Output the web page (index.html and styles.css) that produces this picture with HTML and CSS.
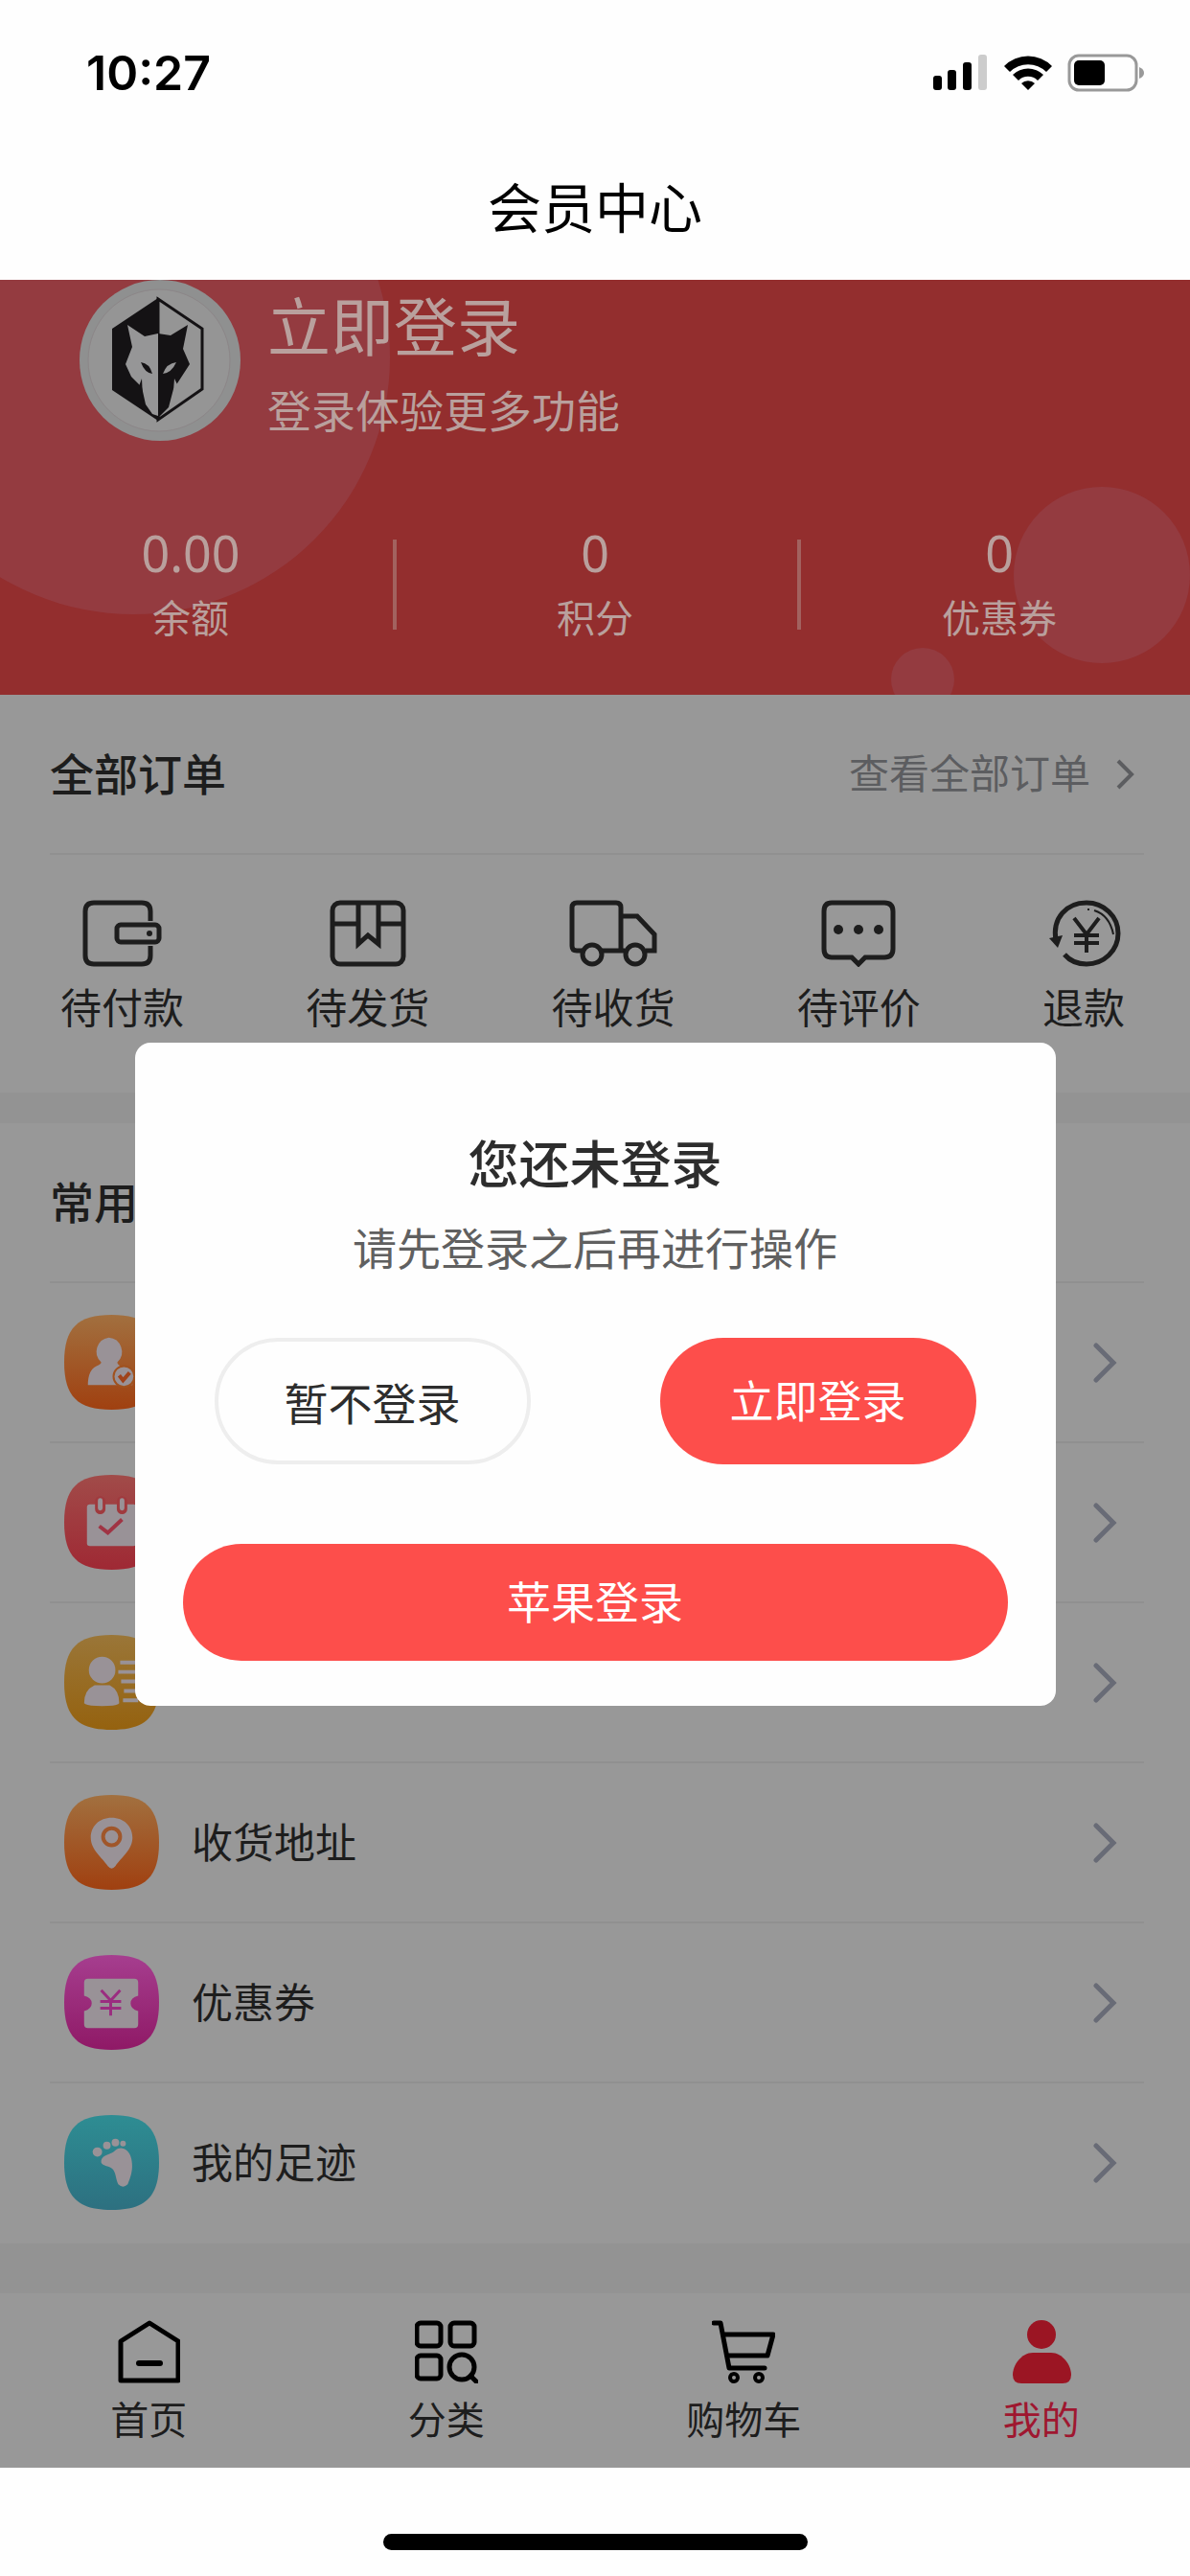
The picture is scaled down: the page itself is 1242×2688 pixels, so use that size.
FILE: index.html
```html
<!DOCTYPE html>
<html lang="zh-CN">
<head>
    <meta charset="UTF-8">
    <meta name="viewport" content="width=device-width, initial-scale=1.0">
    <title>会员中心</title>
    <link rel="stylesheet" href="styles.css">
</head>
<body>
    <div class="status-bar">
        <span class="time">10:27</span>
        <svg class="status-icons" viewBox="0 0 222 40">
            <rect x="0" y="23" width="9" height="15" rx="3"/>
            <rect x="15" y="17" width="9" height="21" rx="3"/>
            <rect x="31" y="9" width="9" height="29" rx="3"/>
            <rect x="47" y="1" width="9" height="37" rx="3" fill="#ccc"/>
            <path d="M74 13 A35 35 0 0 1 124 13 L118 19 A27 27 0 0 0 80 19 Z"/>
            <path d="M83 22 A23 23 0 0 1 115 22 L109 28 A14 14 0 0 0 89 28 Z"/>
            <path d="M92 31 A10 10 0 0 1 106 31 L99 38 Z"/>
            <rect x="142" y="2" width="70" height="36" rx="10" fill="none" stroke="#999" stroke-width="3"/>
            <path d="M215 14 Q220 16 220 20 Q220 24 215 26 Z" fill="#999"/>
            <rect x="147" y="7" width="32" height="26" rx="5"/>
        </svg>
    </div>
    <header class="nav-bar">会员中心</header>

    <main class="page">
        <section class="member">
            <svg class="bubbles" viewBox="0 0 1242 433" preserveAspectRatio="none">
                <circle cx="139" cy="81" r="268"/>
                <circle cx="1150" cy="308" r="92"/>
                <circle cx="963" cy="417" r="33"/>
            </svg>
            <div class="user">
                <svg class="avatar" viewBox="0 0 168 168">
                    <circle cx="84" cy="84" r="84" fill="#8f9090"/>
                    <circle cx="83" cy="84" r="74" fill="#959595" stroke="#8c8688" stroke-width="1"/>
                    <path d="M82 20 L128 51 V114 L82 146 Z" fill="none" stroke="#141214" stroke-width="3"/>
                    <path d="M82 19 L34 51 V115 L82 147 Z" fill="#141214"/>
                    <path d="M82 56 L68 59 L50 47 L55 70 L48 88 L54 101 L65 112 L69 130 L76 140 L82 142 Z" fill="#969697"/>
                    <path d="M82 56 L95 58 L113 47 L108 72 L115 88 L104 105 L98 114 L93 133 L82 144 Z" fill="#141214"/>
                    <path d="M64 86 Q73 87 76 98 Q68 97 64 86 Z M65 103 L66 124 L62 111 Z" fill="#141214"/>
                    <path d="M101 86 Q91 87 87 98 Q96 97 101 86 Z M99 103 L102 109 L98 116 Z" fill="#969697"/>
                </svg>
                <div class="user-text">
                    <a class="login-link" href="#">立即登录</a>
                    <p class="login-tip">登录体验更多功能</p>
                </div>
            </div>
            <div class="stats">
                <div class="stat"><span class="stat-num">0.00</span>余额</div>
                <div class="stat"><span class="stat-num">0</span>积分</div>
                <div class="stat"><span class="stat-num">0</span>优惠券</div>
            </div>
        </section>

        <section class="orders">
            <div class="section-head">
                <h2>全部订单</h2>
                <a class="more" href="#">查看全部订单
                    <svg class="more-arrow" viewBox="0 0 20 32"><path d="M3 2 L17 16 L3 30"/></svg>
                </a>
            </div>
            <nav class="order-nav">
                <a href="#">
                    <svg class="order-icon" viewBox="0 0 84 70">
                        <path d="M71 22 V12 Q71 3 62 3 H12 Q3 3 3 12 V58 Q3 67 12 67 H62 Q71 67 71 58 V48"/>
                        <rect x="36" y="26" width="44" height="18" rx="4"/>
                        <circle class="dot" cx="70" cy="35" r="3"/>
                    </svg>
                    待付款
                </a>
                <a href="#">
                    <svg class="order-icon" viewBox="0 0 84 70">
                        <rect x="5" y="3" width="74" height="64" rx="8"/>
                        <path d="M5 25 H32 M53 25 H79 M32 3 V46 L42 37 L53 46 V3"/>
                    </svg>
                    待发货
                </a>
                <a href="#">
                    <svg class="order-icon truck" viewBox="0 0 92 70">
                        <path d="M14 53 H8 Q3 53 3 48 V8 Q3 3 8 3 H49 Q54 3 54 8 V53 M34 53 H58 M54 17 H71 L89 36 V53 H80"/>
                        <circle cx="24" cy="57" r="10"/>
                        <circle cx="69" cy="57" r="10"/>
                    </svg>
                    待收货
                </a>
                <a href="#">
                    <svg class="order-icon" viewBox="0 0 84 70">
                        <path d="M14 3 H69 Q78 3 78 12 V51 Q78 60 69 60 H49 L42 67 L35 60 H14 Q6 60 6 51 V12 Q6 3 14 3 Z"/>
                        <circle class="dot" cx="21" cy="31" r="5"/>
                        <circle class="dot" cx="42" cy="31" r="5"/>
                        <circle class="dot" cx="63" cy="31" r="5"/>
                    </svg>
                    待评价
                </a>
                <a href="#">
                    <svg class="order-icon" viewBox="-2 0 84 70">
                        <path d="M11 42 C7 19 22 3 43 3 C61 3 76 17 76 35 C76 53 61 67 43 67 C34 67 26 64 20 57"/>
                        <path class="dot" d="M4 40 L18 37 L13 50 Z"/>
                        <path stroke-width="4" d="M30 19 L43 36 L56 19 M43 36 V55 M30 37 H56 M30 45 H56"/>
                        <path stroke-width="2" d="M44 10 H46 M51 11 Q67 16 71 36"/>
                    </svg>
                    退款
                </a>
            </nav>
        </section>

        <section class="tools">
            <div class="section-head"><h2>常用</h2></div>
            <ul class="tool-list">
                <li><a href="#" aria-label="认证">
                    <svg class="tool-icon" viewBox="0 0 100 100">
                        <defs>
                            <linearGradient id="orange" x2="0" y2="1"><stop stop-color="#a2703f"/><stop offset="1" stop-color="#a04010"/></linearGradient>
                            <linearGradient id="red" x2="0" y2="1"><stop stop-color="#a14b49"/><stop offset="1" stop-color="#9f2934"/></linearGradient>
                            <linearGradient id="gold" x2="0" y2="1"><stop stop-color="#9a7638"/><stop offset="1" stop-color="#95620f"/></linearGradient>
                            <linearGradient id="pink" x2="0" y2="1"><stop stop-color="#a63e8f"/><stop offset="1" stop-color="#8f1966"/></linearGradient>
                            <linearGradient id="teal" x2="0" y2="1"><stop stop-color="#2e8d93"/><stop offset="1" stop-color="#2d7080"/></linearGradient>
                        </defs>
                        <path class="tile" fill="url(#orange)" d="M50 0 C86 0 100 14 100 50 C100 86 86 100 50 100 C14 100 0 86 0 50 C0 14 14 0 50 0 Z"/>
                        <path d="M47 24 A15 15 0 0 1 56 50 Q56 53 62 55 Q71 58 72 74 H25 Q25 58 34 54 Q39 52 39 50 A15 15 0 0 1 47 24 Z"/>
                        <circle cx="63" cy="65" r="11" stroke="#a0521f" stroke-width="2"/>
                        <path d="M58 64 L62 69 L69 61" fill="none" stroke="#a0421a" stroke-width="4"/>
                    </svg>
                    <svg class="arrow" viewBox="0 0 26 42"><path d="M4 3 L22 21 L4 39"/></svg>
                </a></li>
                <li><a href="#" aria-label="签到">
                    <svg class="tool-icon" viewBox="0 0 100 100">
                        <path class="tile" fill="url(#red)" d="M50 0 C86 0 100 14 100 50 C100 86 86 100 50 100 C14 100 0 86 0 50 C0 14 14 0 50 0 Z"/>
                        <rect x="24" y="31" width="52" height="44" rx="3"/>
                        <path d="M38 28 V36 M61 28 V36" stroke="#a03a3e" stroke-width="11" stroke-linecap="round"/>
                        <path d="M38 27 V35 M61 27 V35" stroke="#999297" stroke-width="5" stroke-linecap="round"/>
                        <path d="M37 54 L46 61 L61 47" fill="none" stroke="#a03444" stroke-width="4"/>
                    </svg>
                    <svg class="arrow" viewBox="0 0 26 42"><path d="M4 3 L22 21 L4 39"/></svg>
                </a></li>
                <li><a href="#" aria-label="资料">
                    <svg class="tool-icon" viewBox="0 0 100 100">
                        <path class="tile" fill="url(#gold)" d="M50 0 C86 0 100 14 100 50 C100 86 86 100 50 100 C14 100 0 86 0 50 C0 14 14 0 50 0 Z"/>
                        <circle cx="40" cy="37" r="14"/>
                        <path d="M32 53 H48 Q58 58 58 72 Q56 75 40 75 Q24 75 21 72 Q21 58 32 53 Z"/>
                        <path d="M59 29 H78 M57 39 H78 M60 49 H78 M63 59 H78 M62 69 H78" stroke="#999297" stroke-width="4"/>
                    </svg>
                    <svg class="arrow" viewBox="0 0 26 42"><path d="M4 3 L22 21 L4 39"/></svg>
                </a></li>
                <li><a href="#">
                    <svg class="tool-icon" viewBox="0 0 100 100">
                        <path class="tile" fill="url(#orange)" d="M50 0 C86 0 100 14 100 50 C100 86 86 100 50 100 C14 100 0 86 0 50 C0 14 14 0 50 0 Z"/>
                        <path d="M50 24 C63 24 72 33 72 45 C72 58 60 66 54 75 Q50 80 46 75 C40 66 28 58 28 45 C28 33 37 24 50 24 Z"/>
                        <circle cx="50" cy="44" r="9" stroke="#a0562a" stroke-width="4"/>
                    </svg>
                    <span class="tool-name">收货地址</span>
                    <svg class="arrow" viewBox="0 0 26 42"><path d="M4 3 L22 21 L4 39"/></svg>
                </a></li>
                <li><a href="#">
                    <svg class="tool-icon" viewBox="0 0 100 100">
                        <path class="tile" fill="url(#pink)" d="M50 0 C86 0 100 14 100 50 C100 86 86 100 50 100 C14 100 0 86 0 50 C0 14 14 0 50 0 Z"/>
                        <path d="M25 25 H74 Q78 25 78 29 V43 Q70 45 70 51 Q70 57 78 59 V73 Q78 77 74 77 H25 Q21 77 21 73 V59 Q29 57 29 51 Q29 45 21 43 V29 Q21 25 25 25 Z"/>
                        <path d="M39 37 L49 48 L59 37 M49 48 V64 M38 49 H60 M38 56 H60" fill="none" stroke="#9b2d80" stroke-width="3"/>
                    </svg>
                    <span class="tool-name">优惠券</span>
                    <svg class="arrow" viewBox="0 0 26 42"><path d="M4 3 L22 21 L4 39"/></svg>
                </a></li>
                <li><a href="#">
                    <svg class="tool-icon" viewBox="0 0 100 100">
                        <path class="tile" fill="url(#teal)" d="M50 0 C86 0 100 14 100 50 C100 86 86 100 50 100 C14 100 0 86 0 50 C0 14 14 0 50 0 Z"/>
                        <circle cx="35" cy="39" r="5"/>
                        <circle cx="45" cy="32" r="4"/>
                        <circle cx="54" cy="29" r="4"/>
                        <circle cx="62" cy="30" r="3"/>
                        <path d="M39 48 C40 41 50 42 54 37 C60 32 69 36 71 47 C73 58 70 65 67 73 Q62 78 57 73 C54 67 55 60 50 56 C46 53 38 54 39 48 Z"/>
                    </svg>
                    <span class="tool-name">我的足迹</span>
                    <svg class="arrow" viewBox="0 0 26 42"><path d="M4 3 L22 21 L4 39"/></svg>
                </a></li>
            </ul>
        </section>

        <nav class="tab-bar">
            <a href="#">
                <svg class="tab-icon" viewBox="0 0 66 66">
                    <path d="M34 3 L64 22 V63 H4 V22 Z" stroke-width="5"/>
                    <path d="M23 45 H45" stroke-width="6"/>
                </svg>
                首页
            </a>
            <a href="#">
                <svg class="tab-icon" viewBox="0 0 66 66">
                    <rect x="2" y="3" width="25" height="24" rx="4"/>
                    <rect x="37" y="3" width="25" height="24" rx="4"/>
                    <rect x="2" y="37" width="25" height="24" rx="4"/>
                    <circle cx="49" cy="49" r="13"/>
                    <path d="M58 58 L65 65"/>
                </svg>
                分类
            </a>
            <a href="#">
                <svg class="tab-icon" viewBox="0 0 66 66">
                    <path d="M2 3 H9 L18 50 H55 M12 15 H64 L58 37 H16"/>
                    <circle cx="23" cy="60" r="4" stroke-width="4"/>
                    <circle cx="49" cy="60" r="4" stroke-width="4"/>
                </svg>
                购物车
            </a>
            <a class="active" href="#">
                <svg class="tab-icon" viewBox="0 0 66 66">
                    <circle cx="33" cy="15" r="15"/>
                    <path d="M24 34 H43 C55 34 64 47 64 57 Q64 66 55 66 H12 Q3 66 3 57 C3 47 12 34 24 34 Z"/>
                </svg>
                我的
            </a>
        </nav>

        <div class="dialog-wrap">
            <div class="dialog" role="dialog" aria-labelledby="dialog-title">
                <h3 id="dialog-title">您还未登录</h3>
                <p>请先登录之后再进行操作</p>
                <div class="dialog-buttons">
                    <button class="btn btn-plain">暂不登录</button>
                    <button class="btn">立即登录</button>
                </div>
                <button class="btn btn-apple">苹果登录</button>
            </div>
        </div>
    </main>

    <footer class="home-area"><div class="home-indicator"></div></footer>
</body>
</html>
```
FILE: styles.css
```css
* {
    box-sizing: border-box;
    margin: 0;
    padding: 0;
}
body {
    background-color: #fefefe;
    color: #1d1d1d;
    font-family: "Noto Sans CJK SC", sans-serif;
    overflow-x: hidden;
}
a {
    color: inherit;
    text-decoration: none;
}
ul {
    list-style: none;
}
svg {
    display: block;
    flex-shrink: 0;
}

/* status bar and title */
.status-bar {
    display: flex;
    justify-content: space-between;
    align-items: center;
    height: 152px;
    padding: 0 46px 0 90px;
}
.time {
    font-family: Inter, sans-serif;
    font-size: 50px;
    font-weight: 600;
    color: #000;
}
.status-icons {
    width: 222px;
    height: 40px;
}
.nav-bar {
    height: 140px;
    line-height: 124px;
    text-align: center;
    font-size: 56px;
    color: #000;
}

.page {
    position: relative;
    background-color: #939393;
}

/* member card */
.member {
    position: relative;
    height: 433px;
    background-color: #932e2e;
    color: #b9a09d;
}
.bubbles {
    position: absolute;
    top: 0;
    left: 0;
    width: 100%;
    height: 100%;
    fill: #943b40;
}
.user {
    position: relative;
    display: flex;
    gap: 28px;
    padding-left: 83px;
}
.avatar {
    width: 168px;
    height: 168px;
}
.login-link {
    display: block;
    font-size: 66px;
    line-height: 90px;
}
.login-tip {
    font-size: 46px;
    line-height: 88px;
}
.stats {
    position: relative;
    display: grid;
    grid-template-columns: repeat(3, 1fr);
    margin: 73px -12px 0;
}
.stat {
    display: flex;
    flex-direction: column;
    align-items: center;
    font-size: 40px;
    line-height: 64px;
}
.stat-num {
    font-family: "Noto Sans", sans-serif;
    font-size: 52px;
    line-height: 68px;
}
.stat + .stat {
    background: linear-gradient(#a2625f, #a2625f) no-repeat left 20px / 4px 94px;
}

/* orders */
.orders,
.tools {
    background-color: #989898;
}
.orders {
    height: 415px;
}
.section-head {
    display: flex;
    justify-content: space-between;
    align-items: center;
    height: 167px;
    margin: 0 48px 0 52px;
    padding-bottom: 6px;
    border-bottom: 2px solid #909090;
}
.section-head h2 {
    font-size: 46px;
    font-weight: 500;
}
.more {
    display: flex;
    align-items: center;
    gap: 26px;
    padding-right: 10px;
    font-size: 42px;
    color: #5c5d60;
}
.more-arrow {
    width: 20px;
    height: 32px;
    margin-top: 6px;
    fill: none;
    stroke: #5c5d60;
    stroke-width: 4;
}
.order-nav {
    display: flex;
    justify-content: space-between;
    padding: 47px 68px 0 63px;
}
.order-nav a {
    display: flex;
    flex-direction: column;
    align-items: center;
    gap: 8px;
    font-size: 43px;
    line-height: 64px;
}
.order-icon {
    width: 84px;
    height: 70px;
    fill: none;
    stroke: #1d1d1d;
    stroke-width: 5;
}
.order-icon.truck {
    width: 92px;
}
.order-icon .dot {
    fill: #1d1d1d;
    stroke: none;
}

/* tools */
.tools {
    margin-top: 32px;
}
.tool-list a {
    display: flex;
    align-items: center;
    gap: 34px;
    height: 167px;
    margin: 0 48px 0 52px;
    padding: 0 28px 0 15px;
    border-bottom: 2px solid #909090;
    font-size: 43px;
}
.tool-list li:last-child a {
    border-bottom-color: transparent;
}
.tool-name {
    padding-bottom: 6px;
}
.tool-icon {
    width: 99px;
    height: 99px;
    fill: #999297;
}
.arrow {
    width: 26px;
    height: 42px;
    margin-left: auto;
    fill: none;
    stroke: #686b76;
    stroke-width: 5;
    stroke-linecap: round;
}

/* tab bar */
.tab-bar {
    display: grid;
    grid-template-columns: repeat(4, 1fr);
    height: 182px;
    margin-top: 52px;
    padding-top: 28px;
    background-color: #989898;
}
.tab-bar a {
    display: flex;
    flex-direction: column;
    align-items: center;
    gap: 4px;
    font-size: 40px;
    line-height: 64px;
}
.tab-icon {
    width: 66px;
    height: 66px;
    fill: none;
    stroke: #000;
    stroke-width: 5;
    stroke-linejoin: round;
    stroke-linecap: round;
}
.tab-bar .active {
    color: #9f1730;
}
.active .tab-icon {
    fill: #9b1523;
    stroke: none;
}

/* login dialog */
.dialog-wrap {
    position: absolute;
    inset: 0;
    display: flex;
    justify-content: center;
    align-items: center;
}
.dialog {
    width: 961px;
    max-width: 90%;
    padding: 79px 50px 47px;
    border-radius: 16px;
    background-color: #fefefe;
    text-align: center;
}
.dialog h3 {
    font-size: 53px;
    font-weight: 500;
    line-height: 90px;
    color: #2d2d2d;
}
.dialog p {
    font-size: 46px;
    line-height: 86px;
    color: #606060;
}
.dialog-buttons {
    display: flex;
    justify-content: space-between;
    margin: 53px 33px 83px;
}
.btn {
    width: 330px;
    height: 132px;
    padding-bottom: 6px;
    border: none;
    border-radius: 66px;
    background-color: #fd4e4b;
    color: #fff;
    font-family: inherit;
    font-size: 46px;
    cursor: pointer;
}
.btn-plain {
    padding-bottom: 0;
    border: 4px solid #eee;
    background-color: #fefefe;
    color: #2d2d2d;
}
.btn-apple {
    width: 100%;
    height: 122px;
}

.home-area {
    padding: 69px 0 27px;
}
.home-indicator {
    width: 443px;
    height: 17px;
    margin: 0 auto;
    border-radius: 9px;
    background-color: #000;
}
```
